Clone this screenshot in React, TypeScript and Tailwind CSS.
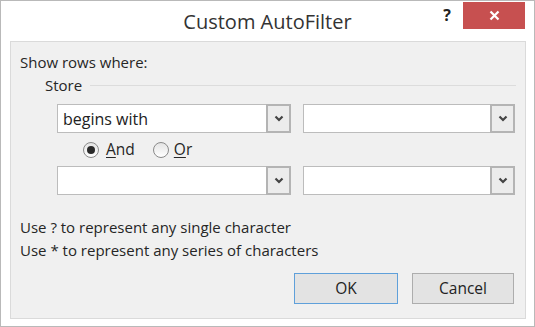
import React from "react";

function Chevron() {
  return (
    <svg width="10" height="7" viewBox="0 0 10 7" className="block">
      <path d="M1.5 1.5 L5 5 L8.5 1.5" fill="none" stroke="#444" strokeWidth="2.2" />
    </svg>
  );
}

function Combo({ width, value }: { width: string; value?: string }) {
  return (
    <div className={`${width} h-[29px] flex bg-white border border-[#bcbcbc]`}>
      <div className="flex-1 flex items-center pl-[5px] text-[16px] text-[#222] leading-none">{value}</div>
      <div className="w-[25px] -my-px -mr-px border-2 border-[#b4b4b4] bg-[#ececec] flex items-center justify-center">
        <Chevron />
      </div>
    </div>
  );
}

function Radio({ checked }: { checked?: boolean }) {
  return (
    <div className="w-[16px] h-[16px] rounded-full border border-[#8a8a8a] bg-gradient-to-b from-[#e4e4e4] to-white flex items-center justify-center">
      {checked && <div className="w-[8px] h-[8px] rounded-full bg-[#2a2a2a]" />}
    </div>
  );
}

export default function App() {
  return (
    <div
      className="w-[535px] h-[327px] bg-white border border-[#b9b9b9] flex flex-col text-[#262626]"
      style={{ fontFamily: '"Open Sans", "Noto Sans", sans-serif' }}
    >
      <div className="h-[40px] grid grid-cols-[1fr_auto_1fr]">
        <div />
        <div className="text-[20px] text-[#333] pt-[9px] leading-[24px]">Custom AutoFilter</div>
        <div className="flex justify-end items-start">
          <div className="mt-[5px] mr-[12px] text-[16px] font-bold text-[#222] leading-[18px]">?</div>
          <div className="w-[62px] h-[27px] mt-[1px] mr-[9px] bg-[#c75050] flex items-center justify-center">
            <svg width="11" height="11" viewBox="0 0 11 11">
              <path d="M1.5 1.5 L9.5 9.5 M9.5 1.5 L1.5 9.5" stroke="white" strokeWidth="2.2" />
            </svg>
          </div>
        </div>
      </div>
      <div className="ml-[9px] mr-[8px] h-[278px] bg-[#f0f0f0] border border-[#dadada] pl-[9px] flex flex-col text-[15px]">
        <div className="h-[20px] mt-[10px] leading-[20px]">Show rows where:</div>
        <div className="flex items-center mt-[3px] h-[20px] ml-[25px] leading-[20px]">
          <span>Store</span>
          <div className="flex-1 h-px bg-[#dcdcdc] ml-[8px] mr-[9px]" />
        </div>
        <div className="flex mt-[9px] ml-[37px] gap-[12px]">
          <Combo width="w-[234px]" value="begins with" />
          <Combo width="w-[212px]" />
        </div>
        <div className="h-[33px] flex items-center ml-[63px] text-[15.5px]">
          <Radio checked />
          <span className="ml-[7px]"><span className="underline underline-offset-2">A</span>nd</span>
          <div className="ml-[18px]"><Radio /></div>
          <span className="ml-[5px]"><span className="underline underline-offset-2">O</span>r</span>
        </div>
        <div className="flex ml-[37px] gap-[12px]">
          <Combo width="w-[234px]" />
          <Combo width="w-[212px]" />
        </div>
        <div className="mt-[21px] leading-[23px]">
          <div>Use ? to represent any single character</div>
          <div>Use * to represent any series of characters</div>
        </div>
        <div className="flex justify-end gap-[14px] mr-[11px] mt-[11px]">
          <div className="w-[104px] h-[31px] bg-[#e3e3e3] border border-[#5fa0da] flex items-center justify-center text-[15.5px] text-[#222]">OK</div>
          <div className="w-[102px] h-[31px] bg-[#e3e3e3] border border-[#adadad] flex items-center justify-center text-[15.5px] text-[#222]">Cancel</div>
        </div>
      </div>
    </div>
  );
}
